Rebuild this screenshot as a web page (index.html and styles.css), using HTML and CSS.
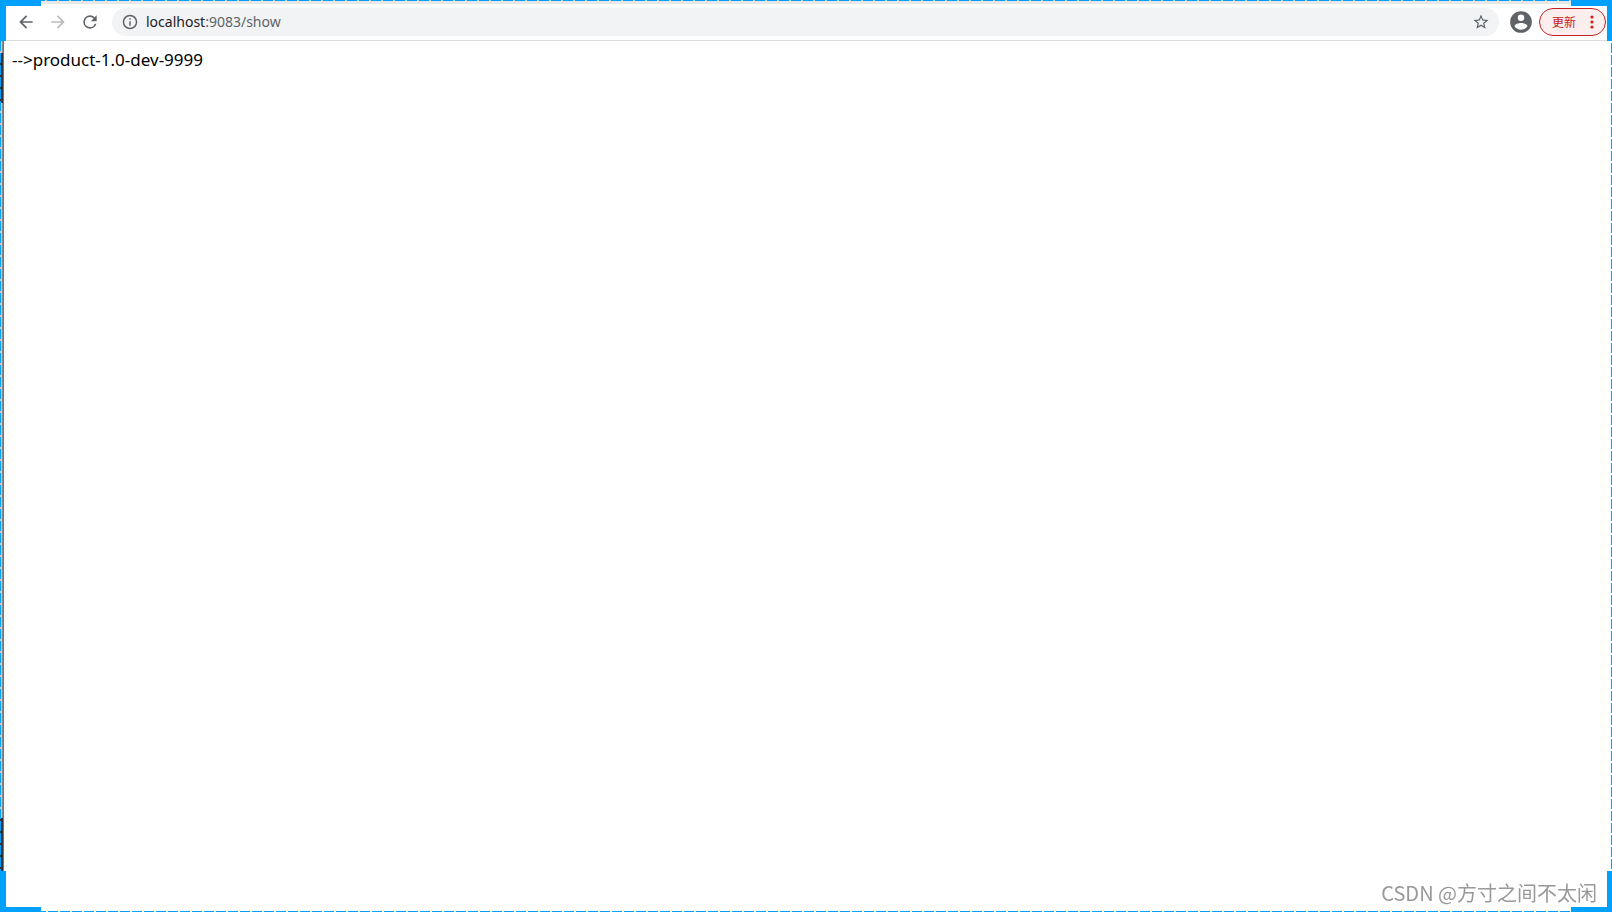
FILE: index.html
```html
<!DOCTYPE html>
<html lang="zh-CN">
<head>
    <meta charset="UTF-8">
    <title>localhost:9083/show</title>
    <link rel="stylesheet" href="styles.css">
</head>
<body>
    <header class="toolbar">
        <button class="icon-button" aria-label="后退">
            <svg width="20" height="20" viewBox="0 0 24 24"><path d="M20 11H7.83l5.59-5.59L12 4l-8 8 8 8 1.41-1.41L7.83 13H20v-2z"/></svg>
        </button>
        <button class="icon-button disabled" aria-label="前进" disabled>
            <svg width="20" height="20" viewBox="0 0 24 24"><path d="M12 4l-1.41 1.41L16.17 11H4v2h12.17l-5.58 5.59L12 20l8-8z"/></svg>
        </button>
        <button class="icon-button" aria-label="重新加载">
            <svg width="20" height="20" viewBox="0 0 24 24"><path d="M17.65 6.35A7.96 7.96 0 0 0 12 4a8 8 0 1 0 7.73 10h-2.08A6 6 0 1 1 12 6c1.66 0 3.14.69 4.22 1.78L13 11h7V4l-2.35 2.35z"/></svg>
        </button>
        <div class="address-bar">
            <svg class="info" width="16" height="16" viewBox="1 1 22 22"><path d="M11 17h2v-6h-2v6zm1-15a10 10 0 1 0 0 20 10 10 0 0 0 0-20zm0 18a8 8 0 1 1 0-16 8 8 0 0 1 0 16zM11 9h2V7h-2v2z"/></svg>
            <a class="url" href="#"><span class="host">localhost</span>:9083/show</a>
            <button class="star" aria-label="为此标签页添加书签">
                <svg width="18" height="18" viewBox="0 0 24 24"><path d="M22 9.24l-7.19-.62L12 2 9.19 8.63 2 9.24l5.46 4.73L5.82 21 12 17.27 18.18 21l-1.63-7.03L22 9.24zM12 15.4l-3.76 2.27 1-4.28-3.32-2.88 4.38-.38L12 6.1l1.71 4.04 4.38.38-3.32 2.88 1 4.28L12 15.4z"/></svg>
            </button>
        </div>
        <button class="profile" aria-label="个人资料">
            <svg width="26" height="26" viewBox="0 0 24 24"><path d="M12 2a10 10 0 1 0 0 20 10 10 0 0 0 0-20zm0 3a3 3 0 1 1 0 6 3 3 0 0 1 0-6zm0 14.2a7.2 7.2 0 0 1-6-3.22c.03-1.99 4-3.08 6-3.08s5.97 1.09 6 3.08a7.2 7.2 0 0 1-6 3.22z"/></svg>
        </button>
        <button class="update">
            更新
            <svg width="4" height="14" viewBox="0 0 4 14"><circle cx="2" cy="2" r="1.6"/><circle cx="2" cy="7" r="1.6"/><circle cx="2" cy="12" r="1.6"/></svg>
        </button>
    </header>

    <main class="content">--&gt;product-1.0-dev-9999</main>

    <div class="watermark">CSDN @方寸之间不太闲</div>

    <!-- 截图选区边框 -->
    <div class="edge edge-top"></div>
    <div class="edge edge-right"></div>
    <div class="edge edge-bottom"></div>
    <div class="edge edge-left"></div>
    <div class="corner top-left"></div>
    <div class="corner top-right"></div>
    <div class="corner bottom-left"></div>
    <div class="corner bottom-right"></div>
</body>
</html>
```
FILE: styles.css
```css
* {
    box-sizing: border-box;
}

body {
    margin: 0;
    min-height: 100vh;
    background: #ffffff;
    color: #000000;
    font-family: 'Noto Sans', 'Noto Sans CJK SC', sans-serif;
    overflow: hidden;
}

button {
    margin: 0;
    padding: 0;
    border: none;
    background: none;
    color: inherit;
    font-family: inherit;
    cursor: pointer;
}

svg {
    display: block;
    fill: currentColor;
}

.toolbar {
    display: flex;
    align-items: center;
    height: 41px;
    padding: 3px 6px 0 16px;
    border-bottom: 1px solid #dadce0;
    color: #5f6368;
}

.icon-button {
    width: 20px;
    margin-right: 12px;
}

.icon-button.disabled {
    color: #babcbe;
    cursor: default;
}

.address-bar {
    flex: 1;
    display: flex;
    align-items: center;
    height: 28px;
    padding: 0 9px 0 10px;
    border-radius: 14px;
    background: #f1f3f4;
}

.url {
    flex: 1;
    margin-left: 8px;
    font-size: 14px;
    line-height: 20px;
    color: #5f6368;
    text-decoration: none;
}

.host {
    color: #202124;
}

.profile {
    margin: 0 5px 0 9px;
}

.update {
    display: flex;
    align-items: center;
    justify-content: space-between;
    width: 67px;
    height: 28px;
    padding: 0 11px 0 12px;
    border: 1px solid #c5221f;
    border-radius: 14px;
    background: #fceeed;
    color: #c5221f;
    font-size: 12px;
}

.content {
    padding: 8px 12px;
    font-size: 17px;
    line-height: 22px;
}

.watermark {
    position: fixed;
    right: 15px;
    bottom: 4px;
    color: #999999;
    font-family: 'Noto Sans CJK SC', sans-serif;
    font-size: 20px;
    line-height: 30px;
}

.edge {
    position: fixed;
}

.edge-top,
.edge-bottom {
    left: 0;
    right: 0;
    height: 1px;
    background: repeating-linear-gradient(90deg, #00a0ff 0 10px, #ffffff 10px 12px);
}

.edge-top {
    top: 0;
    height: 4px;
    background:
        repeating-linear-gradient(90deg, #00a0ff 0 9px, #d0d0d0 9px 11px, #00a0ff 11px 12px) 0 0 / 100% 1px no-repeat,
        #e8e8e8;
}

.edge-bottom {
    bottom: 0;
}

.edge-left,
.edge-right {
    top: 41px;
    bottom: 40px;
    width: 1px;
    background: repeating-linear-gradient(#ffffff 0 2px, #00a0ff 2px 12px);
}

/* 左侧露出的后方窗口：两段深色，中间浅灰 */
.edge-left {
    left: 0;
    width: 4px;
    background:
        repeating-linear-gradient(#00a0ff 0 10px, transparent 10px 12px) 0 0 / 1px 100% no-repeat,
        linear-gradient(#777777, #777777) 3px 0 / 1px 100% no-repeat,
        linear-gradient(#333333, #333333) 0 12px / 3px 50px no-repeat,
        linear-gradient(#333333, #333333) 0 100% / 3px 54px no-repeat,
        linear-gradient(90deg, #cccccc 2px, #888888 2px);
}

.edge-right {
    right: 0;
}

.corner {
    position: fixed;
    width: 41px;
    height: 41px;
    border: 0 solid #00a0ff;
    pointer-events: none;
}

.top-left {
    top: 0;
    left: 0;
    border-width: 6px 0 0 6px;
}

.top-right {
    top: 0;
    right: 0;
    border-width: 6px 5px 0 0;
}

.bottom-left {
    bottom: 0;
    left: 0;
    border-width: 0 0 5px 6px;
}

.bottom-right {
    right: 0;
    bottom: 0;
    border-width: 0 5px 5px 0;
}
```
